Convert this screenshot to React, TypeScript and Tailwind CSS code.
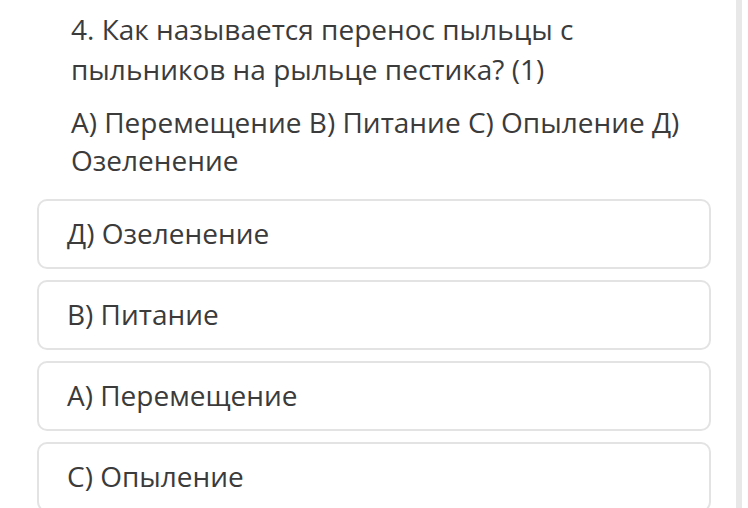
const options = ["Д) Озеленение", "В) Питание", "А) Перемещение", "С) Опыление"];

export default function App() {
  return (
    <div
      className="flex h-[508px] w-[748px] overflow-hidden bg-white text-[#3b3b3b]"
      style={{ fontFamily: '"Open Sans", "Noto Sans", sans-serif' }}
    >
      <div className="w-[736px] shrink-0">
        <div className="w-[700px] pl-[71px] pt-[9px]">
          <p className="text-[28px] leading-[40px]">
            4. Как называется перенос пыльцы с пыльников на рыльце пестика? (1)
          </p>
          <p className="mt-[14px] text-[28px] leading-[38px]">
            А) Перемещение В) Питание С) Опыление Д) Озеленение
          </p>
        </div>
        <div className="mt-[20px] flex flex-col gap-[11px] pl-[37px] pr-[25px]">
          {options.map((o) => (
            <div
              key={o}
              className="flex h-[70px] items-center rounded-[10px] border-2 border-[#e3e3e3] pb-[3px] pl-[28px] text-[28px]"
            >
              {o}
            </div>
          ))}
        </div>
      </div>
      <div className="w-[6px] shrink-0 bg-[#e8e8e8]" />
      <div className="flex-1" />
    </div>
  );
}
